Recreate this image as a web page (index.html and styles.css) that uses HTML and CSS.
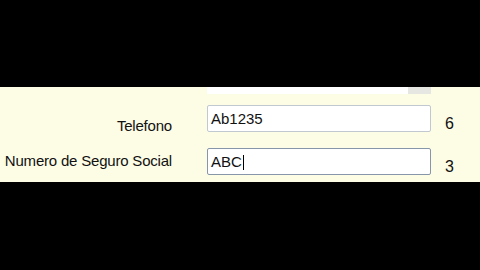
FILE: index.html
```html
<!DOCTYPE html>
<html lang="es">
<head>
    <meta charset="UTF-8">
    <title>Formulario</title>
    <link rel="stylesheet" href="styles.css">
</head>
<body>

    <!-- Form panel -->
    <div class="panel">
        <div class="prev-field">
            <div class="prev-box"></div>
            <div class="prev-btn"></div>
        </div>

        <div class="row row-phone">
            <label class="label">Telefono</label>
            <div class="field">Ab1235</div>
            <span class="count">6</span>
        </div>

        <div class="row row-ssn">
            <label class="label">Numero de Seguro Social</label>
            <div class="field focused">ABC<span class="caret"></span></div>
            <span class="count">3</span>
        </div>
    </div>

</body>
</html>
```

FILE: styles.css
```css
/* General */
body {
    margin: 0;
    background-color: #000;
    font-family: 'Liberation Sans', Arial, sans-serif;
    color: #111;
}

/* Panel */
.panel {
    margin-top: 87px;
    height: 95px;
    box-sizing: border-box;
    padding-bottom: 8px;
    background-color: #fdfde6;
}

.prev-field {
    display: flex;
    margin-left: 207px;
    height: 7px;
}

.prev-box {
    width: 201px;
    background-color: #fff;
}

.prev-btn {
    width: 23px;
    background-color: #e6e6e2;
}

/* Rows */
.row {
    display: grid;
    grid-template-columns: 172px 224px auto;
    column-gap: 35px;
    align-items: start;
}

.row-phone {
    margin-top: 11px;
}

.row-ssn {
    margin-top: 15px;
    column-gap: 35px;
}

.label {
    text-align: right;
    font-size: 15px;
    line-height: 15px;
    letter-spacing: -0.2px;
    white-space: nowrap;
}

.row-phone .label {
    padding-top: 13px;
}

.row-ssn .label {
    padding-top: 5px;
}

.field {
    box-sizing: border-box;
    height: 27px;
    padding: 5px 3px;
    border: 1px solid #c2c8cf;
    border-radius: 2px;
    background-color: #fff;
    font-size: 15px;
    line-height: 15px;
    white-space: nowrap;
}

.field.focused {
    border-color: #8796a8;
}

.caret {
    display: inline-block;
    width: 1px;
    height: 15px;
    margin-left: 1px;
    vertical-align: -3px;
    background-color: #000;
}

.count {
    margin-left: -21px;
    padding-top: 11px;
    font-size: 16px;
    line-height: 16px;
}
```
